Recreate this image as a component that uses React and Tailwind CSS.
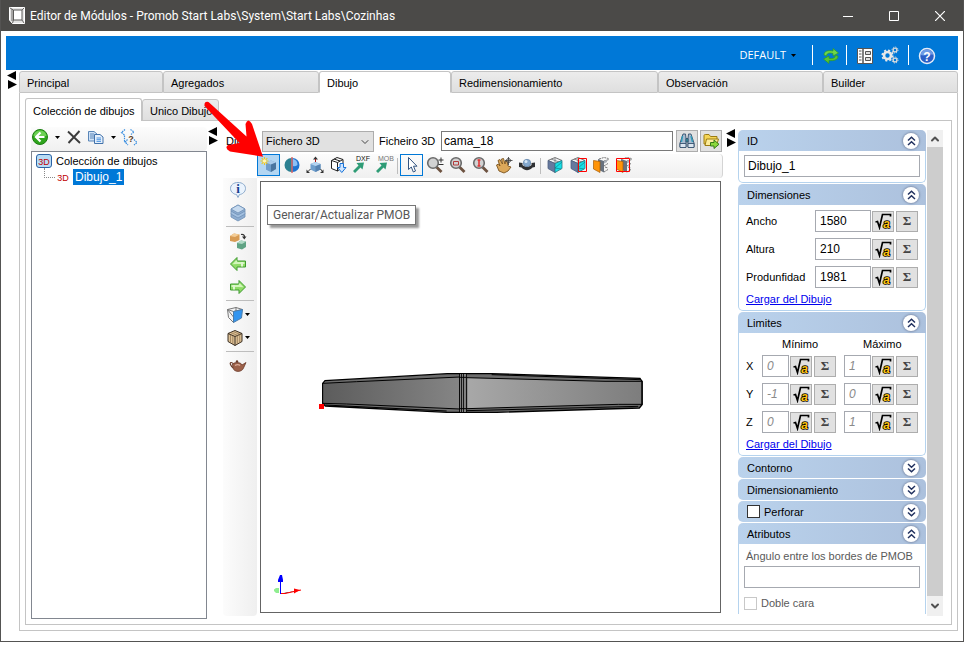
import { ChevronDown, ChevronUp } from "lucide-react";

const SEGOE = "font-['Open_Sans','Noto_Sans',sans-serif]";
const CAPTION = "font-['Roboto','Noto_Sans',sans-serif]";

/* ─── Shared bits ─── */

function Svg({ size = 18, children, ...rest }) {
  return (
    <svg width={size} height={size} viewBox="0 0 18 18" fill="none" aria-hidden="true" {...rest}>
      {children}
    </svg>
  );
}

function Caret({ className = "" }) {
  return (
    <svg width="5" height="3" viewBox="0 0 5 3" className={className} aria-hidden="true">
      <path d="M0 0H5L2.5 3Z" fill="#000" />
    </svg>
  );
}

function SplitterArrows() {
  return (
    <svg width="10" height="18" viewBox="0 0 10 18" aria-hidden="true">
      <path d="M9 0V9L0 4.5ZM1 9V18L10 13.5Z" fill="#000" />
    </svg>
  );
}

/* ─── Icons ─── */

const AppIcon = () => (
  <svg width="16" height="17" viewBox="0 0 16 17" fill="none" aria-hidden="true">
    <path d="M.5 .5H15.5V16.5H3.5L.5 13Z" fill="#e4e4e4" stroke="#fff" />
    <path d="M4.5 3H13V13H4.500Z" fill="#fff" stroke="#5b5a58" />
    <path d="M1 1L4.500 3M15 1L13 3M4.500 13L3.500 16M13 13L15 16M3 2V14" stroke="#5b5a58" strokeWidth=".9" />
  </svg>
);

const RefreshIcon = () => (
  <Svg stroke="#2f9e1c">
    <path d="M2 8C2 4 6 3 11 4V1.500L16.500 6L11 9V6.500C7 5.500 5 6 4.500 9Z" fill="#6fd64a" strokeWidth=".7" />
    <path d="M16 9C16 13 12 14 7 13.500V16.500L1.500 12L7 9V11.300C11 12 13 11 13.500 8.500Z" fill="#58c433" strokeWidth=".7" />
  </Svg>
);

const PanelIcon = () => (
  <Svg>
    <path d="M1.500 1.500H16.500V16.500H1.500Z" fill="#fff" stroke="#555" />
    <path d="M7 1.500V16.500" stroke="#555" strokeWidth="1.500" />
    <path d="M3 4H5.500M3 7H5.500M3 10H5.500M3 13H5.500" stroke="#555" />
    <path d="M9.500 4.500H14.500V7.500H9.500ZM9.500 10.500H14.500V13.500H9.500Z" fill="#ddd" stroke="#555" />
  </Svg>
);

const GearsIcon = () => (
  <Svg>
    <circle cx="6.500" cy="9.500" r="3.500" stroke="#e8e8e8" strokeWidth="2.600" />
    <circle cx="6.500" cy="9.500" r="5.300" stroke="#e8e8e8" strokeWidth="1.600" strokeDasharray="2.100 2.060" />
    <circle cx="14" cy="4" r="1.900" stroke="#ddd" strokeWidth="1.300" />
    <circle cx="14" cy="4" r="3" stroke="#ddd" strokeDasharray="1.200 1.150" />
    <circle cx="14" cy="14" r="1.900" stroke="#ddd" strokeWidth="1.300" />
    <circle cx="14" cy="14" r="3" stroke="#ddd" strokeDasharray="1.200 1.150" />
  </Svg>
);

const HelpIcon = () => (
  <Svg>
    <circle cx="9" cy="9" r="7.500" fill="#2b5fc7" stroke="#e6edf8" strokeWidth="1.500" />
    <path d="M2.500 8C3 3.500 6 2.500 9 2.500S15 4 15.500 8C11 6.500 7 9.500 2.500 8Z" fill="#6d9be6" />
    <text x="9" y="13.500" textAnchor="middle" fontSize="12" fontWeight="bold" fill="#fff">?</text>
  </Svg>
);

const BackIcon = () => (
  <Svg>
    <circle cx="9" cy="9" r="7.500" fill="#2fa51d" stroke="#1d7f12" />
    <path d="M2.500 8C3 4 6 2.500 9 2.500S15 4 15.500 8Z" fill="#6cd154" />
    <path d="M9.500 4.500L5 9L9.500 13.500M5.500 9H13.500" stroke="#fff" strokeWidth="2.200" />
  </Svg>
);

const DeleteIcon = () => (
  <Svg>
    <path d="M3 3.500L15 15M14.500 3L3.500 15" stroke="#3c3c3c" strokeWidth="1.900" />
  </Svg>
);

const CopyIcon = () => (
  <Svg>
    <path d="M1.500 3.500H7L10 6V13H1.500Z" fill="#cfe2f7" stroke="#5a86b8" />
    <path d="M3 6H7M3 8H7M3 10H7" stroke="#5a86b8" />
    <path d="M7.500 6.500H13L16 9V15.500H7.500Z" fill="#e6f0fc" stroke="#4272aa" />
    <path d="M9.500 10H14M9.500 11.700H14M9.500 13.400H14" stroke="#4f95e0" />
  </Svg>
);

const TreeHelpIcon = () => (
  <Svg>
    <path d="M5 1.500L1.500 4.500L5 7.500M10.500 1.500L14 4L11 6.500" stroke="#3a8fe0" strokeWidth="1.200" strokeDasharray="1.500 .8" />
    <path d="M4.500 7.500V14H7M7.500 11.500L5 14L8 17M14 11.500L17 14.500L14 17" stroke="#3a8fe0" strokeWidth="1.200" strokeDasharray="1.500 .8" />
    <text x="11" y="13.500" textAnchor="middle" fontSize="9" fontWeight="bold" fill="#5a3a1c">?</text>
  </Svg>
);

const GenerateIcon = () => (
  <Svg>
    <path d="M6 6.500L11 4.500L16 6.500V13L11 16L6 13.500Z" fill="#7ba7d2" />
    <path d="M11 8.500V16L6 13.500V6.500Z" fill="#6f9dcb" />
    <path d="M6 6.500L11 4.500L16 6.500L11 8.500Z" fill="#a9cbeb" />
    <path d="M11 8.500L16 6.500V13L11 16Z" fill="#4a759f" />
    <path d="M4.500 1V9M.5 5H8.500M1.700 2.200L7.300 7.800M7.300 2.200L1.700 7.800" stroke="#f2c81b" strokeWidth="1.100" />
    <circle cx="4.500" cy="5" r="1.700" fill="#fff7b8" />
  </Svg>
);

const MirrorIcon = () => (
  <Svg>
    <path d="M8.500 2A7 7 0 0 0 8.500 16Z" fill="#2c8091" />
    <path d="M9.500 2A7 7 0 0 1 9.500 16Z" fill="#1f73d0" />
    <path d="M10 3A6 6 0 0 1 14.500 9Q12 11 10 10Z" fill="#8cc0f5" />
    <path d="M9 1V17" stroke="#c22" />
  </Svg>
);

const OriginIcon = () => (
  <Svg>
    <path d="M4.500 8L9.500 6L14.500 8V13.500L9.500 16L4.500 13.500Z" fill="#6f9fcd" />
    <path d="M9.500 10L14.500 8V13.500L9.500 16Z" fill="#5683b2" />
    <path d="M4.500 8L9.500 6L14.500 8L9.500 10Z" fill="#b3d3f0" />
    <path d="M9.500 6V2M4.500 13L2 15.500M14.500 13L16.500 15.500" stroke="#333" />
    <path d="M9.500 .5L12 3.500H7ZM.5 17V13.500L4 17ZM17.500 17V13.500L14 17Z" fill="#333" />
    <path d="M9.500 3V6" stroke="#a11" />
  </Svg>
);

const CubeDownIcon = () => (
  <Svg>
    <path d="M2.500 4.500L8 1.500L14 3.500V11L8.500 15L2.500 12.500ZM2.500 4.500L8.500 6.500V15M8.500 6.500L14 3.500M5 3L11 5" stroke="#222" fill="#fff" />
    <path d="M11 7.500H14.500V11.500H17L12.800 16.500L8.500 11.500H11Z" fill="#cfe5ff" stroke="#1672d8" />
  </Svg>
);

const ExportIcon = ({ label, color }) => (
  <Svg size={20} viewBox="0 0 20 20">
    <text x="12" y="6" textAnchor="middle" fontSize="7" fill={color}>{label}</text>
    <path d="M2 16L7.500 10.500L5.500 8L13 7.500L11.500 14.500L9.500 12.500L4 18Z" fill="#2f9c76" />
  </Svg>
);

const PointerIcon = () => (
  <Svg>
    <path d="M5.500 1.500V13.500L8.300 11L10.300 16L12.500 15L10.500 10.200H14Z" fill="#fff" stroke="#335480" />
  </Svg>
);

function ZoomIcon({ children }) {
  return (
    <Svg>
      <path d="M10.500 11L15.500 16" stroke="#6d5240" strokeWidth="2.800" />
      <circle cx="7" cy="7" r="5.300" fill="#d2d2d2" stroke="#6a6a6a" strokeWidth="1.600" />
      {children}
    </Svg>
  );
}

const HandIcon = () => (
  <Svg>
    <path d="M1.500 9L3.500 8L5 10L3 4.500L5 3.500L7.500 8L6.500 3L8.500 2.500L10 8L10.500 5L12 5L13 10L16 11L13 15L9 17L4 15Z" fill="#dca85a" stroke="#7a531f" strokeWidth=".9" />
    <path d="M13.500 1V9M10 4.500H17.500M11.500 4.500A2 2 0 1 1 15.500 4.500A2 2 0 1 1 11.500 4.500" stroke="#444" strokeWidth=".9" />
  </Svg>
);

const OrbitIcon = () => (
  <Svg>
    <path d="M1 6.500L4.500 7V9C7 11 11 11 13.500 9V7L17 6.500V11L14.500 11.500C11 15 7 15 3.500 11.500L1 11Z" fill="#2f3033" />
    <circle cx="9" cy="7" r="3.700" fill="#85a9cf" stroke="#5d7fa5" strokeWidth=".7" />
    <circle cx="8" cy="5.500" r="1.500" fill="#d8e8f8" />
  </Svg>
);

function FaceCube({ box }) {
  return (
    <Svg>
      <path d="M2 4.500L9 1.500L16 4.500L9 7.500Z" fill="#eef1f4" stroke="#777" />
      <path d="M9 2V7.500M5 3L13 6" stroke="#777" strokeWidth=".8" />
      <path d="M2 4.500L9 7.500V16.500L2 12.500Z" fill="#66799e" stroke="#4e5f80" strokeWidth=".8" />
      <path d="M9 7.500L16 4.500V12.500L9 16.500Z" fill="#16e0e6" stroke="#287a86" strokeWidth=".8" />
      <path d="M9 12L16 6M9 12L15 13" stroke="#11707c" strokeWidth=".6" />
      {box && <path d="M9.500 2.500H17.500V15.500H9.500Z" stroke="#f00" />}
    </Svg>
  );
}

function DoorCube({ box }) {
  return (
    <Svg>
      <path d="M7 3L12 1.500L16.500 2.500M12 5L17 3.500M12 10L16 7.500M12 16L16 13.500M13 11L16 12" stroke="#777" strokeDasharray="2 .8" />
      <path d="M6 3L12 5V16.500L6 13.500Z" fill="#68727f" />
      <path d="M12 5L15 3.500V6L12 7.500Z" fill="#a9afb7" />
      <path d="M1.500 4.500L8 5.500V16.500L1.500 13Z" fill="#ff9408" stroke="#a45b08" strokeWidth=".7" />
      {box && <path d="M1.500 2.500H14.500V15.500H1.500Z" stroke="#f00" />}
    </Svg>
  );
}

const InfoIcon = () => (
  <Svg>
    <path d="M9 1.500C13.500 1.500 16.500 4 16.500 7.500S13 13.500 10.500 13.500L9 16.500L7.500 13.500C5 13.500 1.500 11 1.500 7.500S4.500 1.500 9 1.500Z" fill="#eaf3fd" stroke="#8aa9cb" />
    <text x="9" y="12" textAnchor="middle" fontSize="13" fontWeight="bold" fontFamily="Liberation Serif" fill="#16418f">i</text>
  </Svg>
);

const LayersIcon = () => (
  <Svg stroke="#6f8fb5" strokeWidth=".8">
    <path d="M2 9.500L9 5.500L16 9.500V13L9 17L2 13Z" fill="#8faed2" />
    <path d="M2 7L9 3.500L16 7V10L9 14L2 10Z" fill="#a3c0e0" />
    <path d="M2 5L9 1L16 5V7L9 11L2 7Z" fill="#8faed2" />
    <path d="M2 5L9 1L16 5L9 9Z" fill="#c6daef" />
  </Svg>
);

const ReplaceIcon = () => (
  <Svg>
    <path d="M1 4L5 1.500L10.500 2.500V8L6 10L1 9Z" fill="#d79b54" />
    <path d="M1 4L5 1.500L10.500 2.500L6 5Z" fill="#f3cd97" />
    <path d="M8 11L12 8.500L17 9.500V15L13 17.500L8 16Z" fill="#5fa384" />
    <path d="M8 11L12 8.500L17 9.500L13 12Z" fill="#b1dac6" />
    <path d="M12 2.500C14 2 15.500 3 15.500 5" stroke="#333" strokeWidth="1.200" />
    <path d="M13 4.500H17.500L15.300 7.500Z" fill="#333" />
  </Svg>
);

const GreenArrow = ({ flip }) => (
  <Svg className={flip ? "-scale-x-100" : ""}>
    <path d="M1.500 9L8 2.500V6H16.500V12H8V15.500Z" fill="#8fdc66" stroke="#3f9a30" />
    <path d="M8.500 7H15.500V9H8.500L3.500 9.300L7.500 5Z" fill="#d2f6bb" />
    <path d="M13 7V11.500" stroke="#dff5d2" strokeWidth="2" />
  </Svg>
);

const ViewIcon = () => (
  <Svg>
    <path d="M1.500 3.500L10 1.500L16.500 3.500L7.500 5.500ZM1.500 3.500L2.500 11.500L7.500 16.500V5.500M1.500 3.500L7.500 11M10 1.500V5" fill="#f3f4f5" stroke="#777" />
    <path d="M7.500 5.500L16.500 3.500L15.500 12L7.500 16.500Z" fill="#3295f0" stroke="#4b7dac" />
  </Svg>
);

const WoodIcon = () => (
  <Svg stroke="#3a2e22">
    <path d="M2 4.500L9 1.500L16 4.500V12.500L9 16.500L2 12.500Z" fill="#dfc398" />
    <path d="M2 4.500L9 7.500L16 4.500M9 7.500V16.500" />
    <path d="M4.500 5.800V13.800M6.800 6.700V15M11.300 6.600V15M13.700 5.600V13.700M4.500 3.500L11.500 6.400M7 2.500L14 5.300" stroke="#8a6d4a" strokeWidth=".7" />
  </Svg>
);

const TeapotIcon = () => (
  <Svg>
    <path d="M4.500 7C2.500 4.500 .5 5.500 1.500 7.500C2 9 3 10 4.500 11" stroke="#6b3a29" strokeWidth="1.200" />
    <path d="M3.500 7C6 5 12 5 13 8L17 5.500L14.500 11C13 15.500 5 15.500 4 11Z" fill="#9d614a" stroke="#6b3a29" strokeWidth=".8" />
    <circle cx="8" cy="4.500" r="1.200" fill="#6b3a29" />
    <path d="M6 8.500C7.500 7.500 10 7.500 11 8.500" stroke="#dcab97" strokeWidth="1.300" />
  </Svg>
);

const BinocularsIcon = () => (
  <Svg stroke="#34506e" strokeWidth=".9">
    <path d="M5 2H7.500L8 6.500V15H2V11Z" fill="#a9bccf" />
    <path d="M10.500 2H13L16 11V15H10V6.500Z" fill="#a9bccf" />
    <path d="M2 11.500H8V15.500H2ZM10 11.500H16V15.500H10Z" fill="#dbe5ef" />
    <path d="M8 6.500H10V10H8Z" fill="#2fa0a8" />
    <path d="M4.500 4L3.500 10M13 4L14.500 10" stroke="#2f9dbb" strokeWidth="1.400" />
  </Svg>
);

const FolderIcon = () => (
  <Svg>
    <path d="M2 3.500C2 2.500 3 2.500 4 2.500H7L8.500 4.500H15V12H2Z" fill="#f5d557" stroke="#9c7c12" />
    <path d="M4.500 7H16.500L14.500 13.500H3Z" fill="#fdec9a" stroke="#9c7c12" />
    <path d="M8.500 10.500H12V8L17 12.300L12 16.500V14H8.500Z" fill="#8bd83c" stroke="#357a17" />
  </Svg>
);

function Tag3D({ boxed }) {
  return (
    <svg width="16" height="14" viewBox="0 0 16 14" aria-hidden="true">
      {boxed && <rect x=".5" y=".5" width="15" height="13" rx="2.500" fill="#b9dcf5" stroke="#2a62a4" />}
      <text x="8" y="10.500" textAnchor="middle" fontSize="9" fill="#c00000">3D</text>
    </svg>
  );
}

const SqrtIcon = () => (
  <Svg>
    <path d="M1.500 10L3.500 9.500L5.500 15.500L8.500 2.500H16.500V4.500" stroke="#000" strokeWidth="1.700" />
    <text x="12.500" y="15.500" textAnchor="middle" fontSize="12" fontWeight="bold" fontStyle="italic" fill="#ffc20e" stroke="#000" strokeWidth="1.600" paintOrder="stroke">a</text>
  </Svg>
);

/* ─── Toolbars ─── */

const VIEW_TOOLS = [
  { name: "Generar/Actualizar PMOB", icon: <GenerateIcon />, hot: true },
  { name: "Espejar", icon: <MirrorIcon /> },
  { name: "Origen", icon: <OriginIcon /> },
  { name: "Importar", icon: <CubeDownIcon /> },
  { name: "Exportar DXF", icon: <ExportIcon label="DXF" color="#111" /> },
  { name: "Exportar MOB", icon: <ExportIcon label="MOB" color="#777" /> },
  null,
  { name: "Seleccionar", icon: <PointerIcon />, active: true },
  {
    name: "Zoom",
    icon: <ZoomIcon><path d="M12.500 4H17.500M15 1.500V6.500M12.500 8.500H17.500" stroke="#333" /></ZoomIcon>,
  },
  {
    name: "Zoom ventana",
    icon: <ZoomIcon><path d="M4.500 5.500H9.500V9H4.500Z" stroke="#b23a3a" /></ZoomIcon>,
  },
  {
    name: "Zoom extensión",
    icon: <ZoomIcon><path d="M7 3.500V10.500M5.500 4H8.500M5.500 10H8.500" stroke="#e03030" strokeWidth="1.500" /></ZoomIcon>,
  },
  { name: "Mover", icon: <HandIcon /> },
  { name: "Orbitar", icon: <OrbitIcon /> },
  null,
  { name: "Cara", icon: <FaceCube /> },
  { name: "Cara marcada", icon: <FaceCube box /> },
  { name: "Puerta", icon: <DoorCube /> },
  { name: "Puerta marcada", icon: <DoorCube box /> },
];

function ViewToolbar() {
  return (
    <div className="ml-[39px] mt-0.5 flex h-6 rounded-r border-r border-[#d4d4d4] bg-linear-to-b from-[#fcfcfc] to-[#f0f0f0]">
      {VIEW_TOOLS.map((tool, i) =>
        tool ? (
          <button
            key={tool.name}
            type="button"
            aria-label={tool.name}
            className={`flex h-[22px] w-[23px] items-center justify-center ${
              tool.hot ? "border border-[#0078d7] bg-[#b3d6f2]" : ""
            } ${tool.active ? "border border-[#0078d7]" : ""}`}
          >
            {tool.icon}
          </button>
        ) : (
          <span key={i} className="flex w-[5px] items-center justify-center">
            <span className="h-4 w-px bg-[#bdbdbd]" />
          </span>
        )
      )}
    </div>
  );
}

function SideButton({ name, menu, children }) {
  return (
    <button type="button" aria-label={name} className="flex h-[23px] w-full items-center justify-center pr-1">
      {menu ? (
        <span className="flex items-center gap-px">
          {children}
          <Caret />
        </span>
      ) : (
        children
      )}
    </button>
  );
}

const SideLine = () => <span className="my-0.5 h-px w-7 bg-[#bdbdbd]" />;

function SideToolbar() {
  return (
    <div className="ml-[5px] flex w-[34px] shrink-0 flex-col items-center rounded-b bg-linear-to-r from-[#fcfcfc] to-[#efefef]">
      <SideButton name="Información"><InfoIcon /></SideButton>
      <SideButton name="Capas"><LayersIcon /></SideButton>
      <SideLine />
      <SideButton name="Reemplazar"><ReplaceIcon /></SideButton>
      <SideButton name="Anterior"><GreenArrow /></SideButton>
      <SideButton name="Siguiente"><GreenArrow flip /></SideButton>
      <SideLine />
      <SideButton name="Vista" menu><ViewIcon /></SideButton>
      <SideButton name="Material" menu><WoodIcon /></SideButton>
      <SideLine />
      <SideButton name="Render"><TeapotIcon /></SideButton>
    </div>
  );
}

/* ─── 3D view ─── */

const Bed = () => (
  <svg width="324" height="42" viewBox="27 66 972 126" className="absolute left-[58px] top-[190px]" aria-hidden="true">
    <defs>
      <linearGradient id="face-left" x1="0" x2="1">
        <stop offset="0" stopColor="#5c5c5c" />
        <stop offset="1" stopColor="#858585" />
      </linearGradient>
      <linearGradient id="face-right" x1="0" x2="1">
        <stop offset="0" stopColor="#a8a8a8" />
        <stop offset="1" stopColor="#7d7d7d" />
      </linearGradient>
    </defs>
    <path d="M38 100L45 92L412 71H545L990 85L996 94V164L988 174L560 187H410L46 168L38 160Z" fill="#6d6d6d" stroke="#000" strokeWidth="4" />
    <path d="M38 100L140 95L450 81V177L110 162L38 160Z" fill="url(#face-left)" stroke="#000" strokeWidth="3" />
    <path d="M470 83L885 94H996V163H925L470 176Z" fill="url(#face-right)" stroke="#000" strokeWidth="3" />
    <path d="M450 72H470V186H450Z" fill="#999" />
    <path d="M449 72V186M455 72V186M461 72V186M469 72V186M996 92V165" stroke="#000" strokeWidth="3" />
    <path d="M545 74L990 89M46 165L410 183M470 182L985 169M450 82H470M450 176H470" stroke="#000" strokeWidth="3" />
    <path d="M27 162H42V177H27Z" fill="#f00" />
  </svg>
);

const Axes = () => (
  <svg width="28" height="20" viewBox="0 0 28 20" className="absolute bottom-[17px] left-[13px]" aria-hidden="true">
    <path d="M0 14.500L2 13H5V18H2L0 16Z" fill="#90ee90" />
    <path d="M6.500 19V5" stroke="#00f" />
    <path d="M4 7V5L6 0H8L9 5V7Z" fill="#00f" />
    <path d="M7 18.500H11L20 16.500L27 15" stroke="#f00" strokeWidth="1.200" />
    <path d="M20 13.500L26 15L20 18.500Z" fill="#f00" />
  </svg>
);

function Viewport() {
  return (
    <div className="relative mb-[3px] ml-[3px] mr-0.5 mt-[3px] flex-1 border border-[#646464] bg-white">
      <div
        role="tooltip"
        className={`absolute left-1.5 top-[23px] flex h-5 items-center whitespace-nowrap border border-[#767676] bg-white px-[5px] text-[#575757] shadow-[3px_3px_2px_#999] ${CAPTION} text-[12px]`}
      >
        Generar/Actualizar PMOB
      </div>
      <Bed />
      <Axes />
    </div>
  );
}

/* ─── Left column ─── */

function DrawingTree() {
  return (
    <div className="mb-[5px] mt-1.5 flex w-44 shrink-0 flex-col">
      <div className="flex h-6 items-center rounded-r bg-linear-to-b from-[#fcfcfc] to-[#f0f0f0] pb-1">
        <button type="button" aria-label="Agregar" className="flex items-center gap-1.5">
          <BackIcon />
          <Caret />
        </button>
        <button type="button" aria-label="Eliminar" className="ml-[5px]"><DeleteIcon /></button>
        <button type="button" aria-label="Copiar" className="ml-1 flex items-center gap-1.5">
          <CopyIcon />
          <Caret />
        </button>
        <button type="button" aria-label="Buscar" className="ml-1"><TreeHelpIcon /></button>
      </div>
      <ul className="flex-1 border border-[#828790] bg-white">
        <li>
          <div className="flex h-[17px] items-center gap-1 pl-1">
            <Tag3D boxed />
            <span>Colección de dibujos</span>
          </div>
          <ul>
            <li className="flex h-4 items-center pl-3">
              <span className="mb-2 h-2.5 w-[11px] border-b border-l border-dotted border-[#888]" />
              <Tag3D />
              <button type="button" className="ml-0.5 h-4 bg-[#0078d7] px-0.5 text-[12px] leading-4 text-white">Dibujo_1</button>
            </li>
          </ul>
        </li>
      </ul>
    </div>
  );
}

/* ─── Right column ─── */

function Chevrons({ down }) {
  return (
    <svg width="9" height="10" viewBox="0 0 9 10" fill="none" stroke="#20305e" strokeWidth="1.500" className={down ? "rotate-180" : ""} aria-hidden="true">
      <path d="M1 4.500L4.500 1.300L8 4.500M1 9L4.500 5.800L8 9" />
    </svg>
  );
}

function Section({ title, closed, check, open, children }) {
  return (
    <section>
      <header
        className={`flex h-[21px] items-center justify-between bg-linear-to-r from-[#bad2ec] to-[#acc1dd] pl-[9px] pr-[7px] ${
          closed ? "rounded-[5px]" : "rounded-t-[5px]"
        }`}
      >
        {check ? (
          <label className="flex items-center gap-1">
            <input type="checkbox" className="size-[13px] appearance-none border border-[#333] bg-white" />
            {title}
          </label>
        ) : (
          <h2>{title}</h2>
        )}
        <button
          type="button"
          aria-label={`${closed ? "Abrir" : "Cerrar"} ${title}`}
          className="flex size-4 items-center justify-center rounded-full bg-white shadow-[0_0_2px_1px_#8494b0]"
        >
          <Chevrons down={closed} />
        </button>
      </header>
      {!closed && (
        <div className={`border-x border-[#b5d3ee] bg-white px-[5px] ${open ? "" : "rounded-b-[5px] border-b"}`}>
          {children}
        </div>
      )}
    </section>
  );
}

function FormulaButtons() {
  const button = "flex h-[21px] w-[22px] items-center justify-center border border-[#adadad] bg-[#e1e1e1]";
  return (
    <span className="ml-px flex gap-0.5">
      <button type="button" aria-label="Fórmula" className={button}><SqrtIcon /></button>
      <button type="button" aria-label="Suma" className={`${button} font-['Liberation_Serif',serif] text-[13px] font-bold text-[#444]`}>Σ</button>
    </span>
  );
}

const DIMENSIONS = [
  ["Ancho", "1580"],
  ["Altura", "210"],
  ["Produnfidad", "1981"],
];

const LIMITS = [
  ["X", "0", "1"],
  ["Y", "-1", "0"],
  ["Z", "0", "1"],
];

const FIELD = "h-[22px] border border-[#a6a9b0] bg-white outline-none";

function LimitField({ name, value }) {
  return (
    <span className="flex items-center">
      <input aria-label={name} defaultValue={value} className={`${FIELD} w-[27px] px-1 text-[12px] italic text-[#8a8a8a]`} />
      <FormulaButtons />
    </span>
  );
}

function Properties() {
  return (
    <div className="flex w-[188px] shrink-0 flex-col gap-px overflow-hidden">
      <Section title="ID">
        <div className="pb-[5px] pt-1">
          <input aria-label="ID" defaultValue="Dibujo_1" className={`${FIELD} w-full px-[3px] text-[12px]`} />
        </div>
      </Section>

      <Section title="Dimensiones">
        <div className="flex flex-col gap-1.5 pt-[5px]">
          {DIMENSIONS.map(([label, value]) => (
            <div key={label} className="flex items-center pl-0.5">
              <label htmlFor={label} className="flex-1">{label}</label>
              <input id={label} defaultValue={value} className={`${FIELD} w-14 px-1 text-[12px]`} />
              <span className="mr-0.5"><FormulaButtons /></span>
            </div>
          ))}
        </div>
        <a href="#dimensiones" className="my-1 ml-0.5 inline-block leading-[14px] text-[#0000ee] underline">Cargar del Dibujo</a>
      </Section>

      <Section title="Limites">
        <div className="flex h-[22px] items-center pl-[38px]">
          <span className="w-[81px]">Mínimo</span>
          <span>Máximo</span>
        </div>
        <div className="flex flex-col gap-1.5">
          {LIMITS.map(([axis, min, max]) => (
            <div key={axis} className="flex items-center justify-between pl-0.5 pr-0.5">
              <span className="w-2">{axis}</span>
              <LimitField name={`${axis} mínimo`} value={min} />
              <LimitField name={`${axis} máximo`} value={max} />
            </div>
          ))}
        </div>
        <a href="#limites" className="my-1 ml-0.5 inline-block leading-[14px] text-[#0000ee] underline">Cargar del Dibujo</a>
      </Section>

      <Section title="Contorno" closed />
      <Section title="Dimensionamiento" closed />
      <Section title="Perforar" closed check />

      <Section title="Atributos" open>
        <div className="flex flex-col pb-1 pt-1 text-[#5a5a5a]">
          <label htmlFor="angulo" className="whitespace-nowrap pl-0.5 leading-4">Ángulo entre los bordes de PMOB</label>
          <input id="angulo" className={`${FIELD} mt-0.5 w-full px-1`} />
          <label className="mt-2 flex items-center gap-1">
            <input type="checkbox" className="size-[13px] appearance-none border border-[#c8c8c8] bg-white" />
            Doble cara
          </label>
        </div>
      </Section>
    </div>
  );
}

function ScrollBar() {
  return (
    <div className="ml-px flex w-4 shrink-0 flex-col bg-[#cdcdcd]">
      <button type="button" aria-label="Subir" className="flex h-[17px] items-center justify-center bg-[#f0f0f0]">
        <ChevronUp size={12} strokeWidth={4} color="#505050" />
      </button>
      <div className="flex-1" />
      <button type="button" aria-label="Bajar" className="flex h-5 items-center justify-center bg-[#f0f0f0]">
        <ChevronDown size={12} strokeWidth={4} color="#505050" />
      </button>
    </div>
  );
}

/* ─── Window ─── */

const TABS = ["Principal", "Agregados", "Dibujo", "Redimensionamiento", "Observación", "Builder"];

function TitleBar() {
  return (
    <header className={`flex h-[31px] items-center bg-[#4b4a48] pl-[8px] text-white ${CAPTION} text-[12px]`}>
      <AppIcon />
      <h1 className="ml-[5px] flex-1 whitespace-nowrap">Editor de Módulos - Promob Start Labs\System\Start Labs\Cozinhas</h1>
      <button type="button" aria-label="Minimizar" className="flex w-[46px] justify-center">
        <svg width="10" height="10"><path d="M0 5.500H10" stroke="#fff" /></svg>
      </button>
      <button type="button" aria-label="Maximizar" className="flex w-[46px] justify-center">
        <svg width="10" height="10"><path d="M.5 .5H9.500V9.500H.5Z" stroke="#fff" fill="none" /></svg>
      </button>
      <button type="button" aria-label="Cerrar" className="flex w-[46px] justify-center">
        <svg width="10" height="10"><path d="M0 0L10 10M10 0L0 10" stroke="#fff" strokeWidth="1.200" /></svg>
      </button>
    </header>
  );
}

function Banner() {
  return (
    <div className="mx-[5px] mt-[5px] flex h-[34px] items-center justify-end bg-[#0078d7] pr-[22px] pt-1">
      <button type="button" className={`flex items-center gap-[5px] text-white ${SEGOE} text-[11px]`}>
        DEFAULT
        <Caret />
      </button>
      <span className="ml-4 h-5 w-px bg-white" />
      <button type="button" aria-label="Actualizar" className="ml-[9px] mr-1.5 pt-0.5"><RefreshIcon /></button>
      <span className="h-5 w-px bg-white" />
      <button type="button" aria-label="Paneles" className="ml-[9px] pt-0.5"><PanelIcon /></button>
      <button type="button" aria-label="Opciones" className="mx-[7px]"><GearsIcon /></button>
      <span className="ml-0.5 h-5 w-px bg-white" />
      <button type="button" aria-label="Ayuda" className="ml-[9px] pt-0.5"><HelpIcon /></button>
    </div>
  );
}

export default function App() {
  const iconButton = "flex h-[22px] w-[22px] items-center justify-center border border-[#adadad] bg-[#e1e1e1]";

  return (
    <div className="flex min-h-screen bg-white pb-2.5 pr-[11px] font-['Liberation_Sans',Arial,sans-serif] text-[11px] leading-[14px] text-black">
      <main className="flex min-w-0 flex-1 flex-col border border-t-0 border-[#545352]">
        <TitleBar />
        <Banner />

        <div className="mb-2.5 mr-[5px] mt-px flex flex-1">
          <div className="w-[18px] shrink-0 pl-1.5"><SplitterArrows /></div>

          <div className="flex min-w-0 flex-1 flex-col">
            <nav className="grid h-[22px] shrink-0 grid-cols-[144fr_156fr_132fr_207fr_165fr_135fr]">
              {TABS.map((tab) => (
                <button
                  key={tab}
                  type="button"
                  className={`rounded-t-[3px] border border-[#c4c4c4] pl-[7px] pt-0.5 text-left ${
                    tab === "Dibujo" ? "border-b-white bg-white" : "bg-linear-to-b from-[#ececec] to-[#dfdfdf]"
                  }`}
                >
                  {tab}
                </button>
              ))}
            </nav>

            <div className="flex flex-1 flex-col border border-t-0 border-[#c4c4c4] px-[5px] pb-[5px] pt-[5px]">
              <nav className="relative z-10 flex h-[23px] shrink-0 items-end">
                <button type="button" className="h-[23px] w-[117px] whitespace-nowrap rounded-t-[3px] border border-b-0 border-[#c4c4c4] bg-white pl-[7px] pr-1 pt-0.5 text-left">
                  Colección de dibujos
                </button>
                <button type="button" className="h-[22px] w-[77px] whitespace-nowrap rounded-t-[3px] border border-[#c4c4c4] bg-linear-to-b from-[#ececec] to-[#dfdfdf] pl-[7px] pt-0.5 text-left">
                  Unico Dibujo
                </button>
              </nav>

              <div className="relative -mt-px flex flex-1 border border-[#c4c4c4] pl-[5px] pr-2">
                <DrawingTree />
                <div className="w-[11px] shrink-0 pl-px pt-1.5"><SplitterArrows /></div>

                <div className="mb-2 mt-[9px] flex min-w-0 flex-1 flex-col">
                  <div className="flex h-[22px] shrink-0 items-center">
                    <label htmlFor="dibujo-tipo" className="w-11 pl-2">Dibujo</label>
                    <div className="relative">
                      <select id="dibujo-tipo" className="h-[21px] w-28 appearance-none border border-[#adadad] bg-[#e1e1e1] pl-[3px]">
                        <option>Fichero 3D</option>
                      </select>
                      <ChevronDown size={12} color="#444" className="pointer-events-none absolute right-[3px] top-[5px]" />
                    </div>
                    <label htmlFor="fichero" className="w-[67px] whitespace-nowrap pl-[5px]">Ficheiro 3D</label>
                    <input id="fichero" defaultValue="cama_18" className="h-5 min-w-0 flex-1 border border-[#7a7a7a] px-0.5 text-[12px] outline-none" />
                    <button type="button" aria-label="Buscar fichero" className={`ml-[3px] ${iconButton}`}><BinocularsIcon /></button>
                    <button type="button" aria-label="Abrir carpeta" className={`ml-0.5 mr-px ${iconButton}`}><FolderIcon /></button>
                  </div>
                  <ViewToolbar />
                  <div className="flex flex-1">
                    <SideToolbar />
                    <Viewport />
                  </div>
                </div>

                <div className="w-[15px] shrink-0 pl-[3px] pt-2"><SplitterArrows /></div>
                <div className="mb-2 mt-[9px] flex">
                  <Properties />
                  <ScrollBar />
                </div>

                {/* Red arrow pointing at the first tool */}
                <svg width="66" height="62" viewBox="0 0 66 62" className="pointer-events-none absolute -top-[23px] left-[174px] z-20" aria-hidden="true">
                  <path
                    d="M4.500 8Q4 3 8.500 4L46.500 38.500L45.500 26Q48 19 52 26L63 58.700L30 53.500Q24 50 28 47L39.500 45Z"
                    fill="#f00"
                  />
                </svg>
              </div>
            </div>
          </div>
        </div>
      </main>
    </div>
  );
}
